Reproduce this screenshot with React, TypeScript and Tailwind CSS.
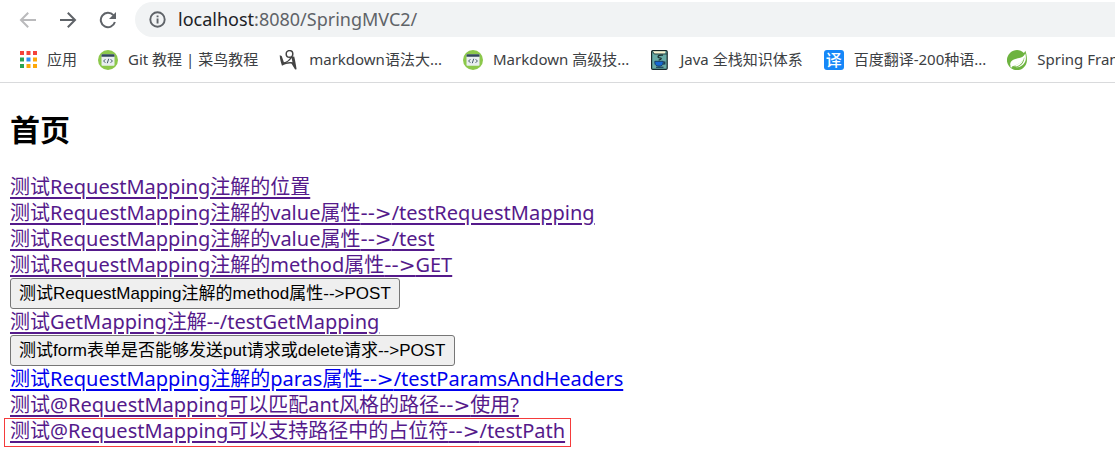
import type { ReactNode } from "react";

function BackIcon() {
  return (
    <svg width="18" height="18" viewBox="0 0 18 18" fill="none" stroke="#bababc" strokeWidth="2">
      <path d="M17 9H2.5M9.2 1.8 2 9l7.2 7.2" />
    </svg>
  );
}

function ForwardIcon() {
  return (
    <svg width="18" height="18" viewBox="0 0 18 18" fill="none" stroke="#5f6368" strokeWidth="2">
      <path d="M1 9h14.5M8.8 1.8 16 9l-7.2 7.2" />
    </svg>
  );
}

function ReloadIcon() {
  return (
    <svg width="18" height="18" viewBox="0 0 18 18">
      <path d="M14.4 4.2A7.2 7.2 0 1 0 15.9 11" fill="none" stroke="#5f6368" strokeWidth="2" />
      <path d="M17 1v7h-7z" fill="#5f6368" />
    </svg>
  );
}

function InfoIcon() {
  return (
    <svg width="17" height="17" viewBox="0 0 17 17">
      <circle cx="8.5" cy="8.5" r="7.2" fill="none" stroke="#5f6368" strokeWidth="1.9" />
      <path d="M7.6 4.4h1.9v1.9H7.6zM7.6 7.4h1.9v5H7.6z" fill="#5f6368" />
    </svg>
  );
}

function AppsIcon() {
  return (
    <svg width="17" height="17" viewBox="0 0 17 17">
      <path d="M0 0h4v4H0zM6.5 0h4v4h-4zM13 0h4v4h-4z" fill="#f4433a" />
      <path d="M0 6.5h4v4H0zM0 13h4v4H0z" fill="#2aa352" />
      <path d="M6.5 6.5h4v4h-4z" fill="#2a8cf5" />
      <path d="M13 6.5h4v4h-4zM6.5 13h4v4h-4zM13 13h4v4h-4z" fill="#fda808" />
    </svg>
  );
}

function CodeIcon() {
  return (
    <svg width="20" height="20" viewBox="0 0 20 20">
      <circle cx="10" cy="10" r="10" fill="#8cc84b" />
      <rect x="3.5" y="4.2" width="13" height="11.6" rx="0.8" fill="#e9eef0" />
      <path d="M3.5 6.8V5q0-.8.8-.8h11.4q.8 0 .8.8v1.8z" fill="#32475c" />
      <path d="M7.4 9.2 5.6 11l1.8 1.8M12.6 9.2l1.8 1.8-1.8 1.8M10.700 8.800l-1.400 4.400" fill="none" stroke="#32475c" strokeWidth="0.9" />
    </svg>
  );
}

function FigureIcon() {
  return (
    <svg width="20" height="20" viewBox="0 0 20 20">
      <circle cx="10.500" cy="3.900" r="3.300" fill="none" stroke="#444" strokeWidth="1.500" />
      <path d="M.7 5.300 2.700 6l2.200 6.200c2.600-.2 4.800-2 7-5.400l3.300-.4c.9 3.600 1.700 8 2.400 12.800l-1.500.3-3.500-5.800c-2.600-.5-6.200.2-9.600 2C1.900 12.500.9 9 .7 5.300z" fill="#444" />
      <path d="M6.800 12.600c2.400-.7 4.200-2.100 5.800-4.600l.9 4.300c-2.100-.5-4.300-.4-6.700.3z" fill="#fff" />
    </svg>
  );
}

function BookIcon() {
  return (
    <svg width="20" height="20" viewBox="-1 0 20 20">
      <rect x="0.600" y="0.600" width="15.600" height="18.800" rx="1.200" fill="#67aaa5" stroke="#17282b" strokeWidth="1.200" />
      <path d="M2 1.200h12.500l-.8 2.600H3.500z" fill="#fbf3d0" />
      <path d="M1.400 1.500 3.300 4h12.500" fill="none" stroke="#17282b" strokeWidth="0.800" />
      <path d="M12 5.200c-3-.4-5 .4-5 1.800s3.300.4 3.300 1.600c0 .8-1 1.200-2.600 1.500" fill="none" stroke="#17282b" strokeWidth="1.200" />
      <path d="M3.800 11.300h8.400v1.500c0 2.400-1.800 3.400-4.100 3.400s-4.300-1-4.300-3.400z" fill="#1769d2" stroke="#12304f" strokeWidth=".8" />
      <path d="M12.200 12h1.600v2h-2M5 17.300h7.500" fill="none" stroke="#12304f" strokeWidth="1.100" />
    </svg>
  );
}

function TranslateIcon() {
  return (
    <span className="flex size-5 items-center justify-center rounded-[3px] bg-[#1687f8] text-base font-medium leading-5 text-white">
      译
    </span>
  );
}

function LeafIcon() {
  return (
    <svg width="20" height="20" viewBox="0 0 20 20">
      <path d="M18.300.8c.9 2.500 1.700 5.500 1.600 8.500A10 10 0 1 1 3.200 2.800C7-.8 13.200-.9 16.900 3q.9-1 1.400-2.200z" fill="#6db33f" />
      <path d="M18.300 3.500c-1.500 3.300-4 4.200-7.300 4.800C5.500 9.300 2.700 11.500 3.300 15.500c.8.5 1.800.6 2.900.4C11.500 15 15.500 12 17.300 7.300c.2 5-3.300 9-8.600 10.200 5.700-.1 10.300-4.300 10.200-9.500 0-1.600-.2-3.100-.6-4.500z" fill="#fff" />
      <path d="M5.500 15.900c5.200-.6 9.200-3.600 11.800-8.600-1 4.500-3.500 7.500-7.300 9.200z" fill="#fff" />
      <circle cx="4.400" cy="16.600" r="1" fill="#fff" />
    </svg>
  );
}

function Bookmark({ icon, children }: { icon: ReactNode; children: ReactNode }) {
  return (
    <a href="#" className="flex shrink-0 items-center gap-2.5 whitespace-nowrap">
      {icon}
      <span>{children}</span>
    </a>
  );
}

function Arrow() {
  return <span className="font-['DejaVu_Sans',sans-serif]">--&gt;</span>;
}

function PageLink({ fresh = false, children }: { fresh?: boolean; children: ReactNode }) {
  return (
    <a
      href="#"
      className={
        fresh
          ? "text-[#0000ee] underline decoration-2 underline-offset-3"
          : "text-[#551a8b] underline decoration-2 underline-offset-3"
      }
    >
      {children}
    </a>
  );
}

function PostButton({ children }: { children: ReactNode }) {
  return (
    <button
      type="submit"
      className="block rounded-[3px] border border-[#767676] bg-[#efefef] px-2 pt-px font-['Liberation_Sans','Noto_Sans_CJK_SC',sans-serif] text-[17px] leading-7 text-black"
    >
      {children}
    </button>
  );
}

export default function App() {
  return (
    <div className="overflow-hidden bg-white font-['Noto_Sans','Noto_Sans_CJK_SC',sans-serif]">
      <header className="border-b border-[#d9dadc] text-[#3c4043]">
        <div className="flex items-center pt-0.5 pl-[19px]">
          <nav className="flex items-center gap-[22px]">
            <button type="button" aria-label="Back"><BackIcon /></button>
            <button type="button" aria-label="Forward"><ForwardIcon /></button>
            <button type="button" aria-label="Reload"><ReloadIcon /></button>
          </nav>
          <div className="ml-[18px] flex h-[35px] flex-1 items-center gap-3 rounded-l-full bg-[#f1f3f4] pl-3.5">
            <InfoIcon />
            <p className="pb-0.5 text-lg text-[#5f6368]">
              <span className="text-[#202124]">localhost</span>:8080/SpringMVC2/
            </p>
          </div>
        </div>
        <nav className="flex h-[45px] items-center gap-[21px] pl-5 text-[15px]">
          <Bookmark icon={<AppsIcon />}>应用</Bookmark>
          <Bookmark icon={<CodeIcon />}>Git 教程 | 菜鸟教程</Bookmark>
          <Bookmark icon={<FigureIcon />}>markdown语法大...</Bookmark>
          <Bookmark icon={<CodeIcon />}>Markdown 高级技...</Bookmark>
          <Bookmark icon={<BookIcon />}>Java 全栈知识体系</Bookmark>
          <Bookmark icon={<TranslateIcon />}>百度翻译-200种语...</Bookmark>
          <Bookmark icon={<LeafIcon />}>Spring Framework</Bookmark>
        </nav>
      </header>
      <main className="px-2.5 pt-[26px] pb-4 text-xl leading-[26px]">
        <h1 className="mb-6 text-[30px] font-bold leading-[41px] text-black">首页</h1>
        <div><PageLink>测试RequestMapping注解的位置</PageLink></div>
        <div><PageLink>测试RequestMapping注解的value属性<Arrow />/testRequestMapping</PageLink></div>
        <div><PageLink>测试RequestMapping注解的value属性<Arrow />/test</PageLink></div>
        <div><PageLink>测试RequestMapping注解的method属性<Arrow />GET</PageLink></div>
        <form><PostButton>测试RequestMapping注解的method属性--&gt;POST</PostButton></form>
        <div><PageLink>测试GetMapping注解--/testGetMapping</PageLink></div>
        <form><PostButton>测试form表单是否能够发送put请求或delete请求--&gt;POST</PostButton></form>
        <div><PageLink fresh>测试RequestMapping注解的paras属性<Arrow />/testParamsAndHeaders</PageLink></div>
        <div><PageLink>测试@RequestMapping可以匹配ant风格的路径<Arrow />使用?</PageLink></div>
        <div className="relative w-fit">
          <PageLink>测试@RequestMapping可以支持路径中的占位符<Arrow />/testPath</PageLink>
          <span className="pointer-events-none absolute -inset-x-1.5 top-0 -bottom-[3px] border border-[#f53b3b]" />
        </div>
      </main>
    </div>
  );
}
